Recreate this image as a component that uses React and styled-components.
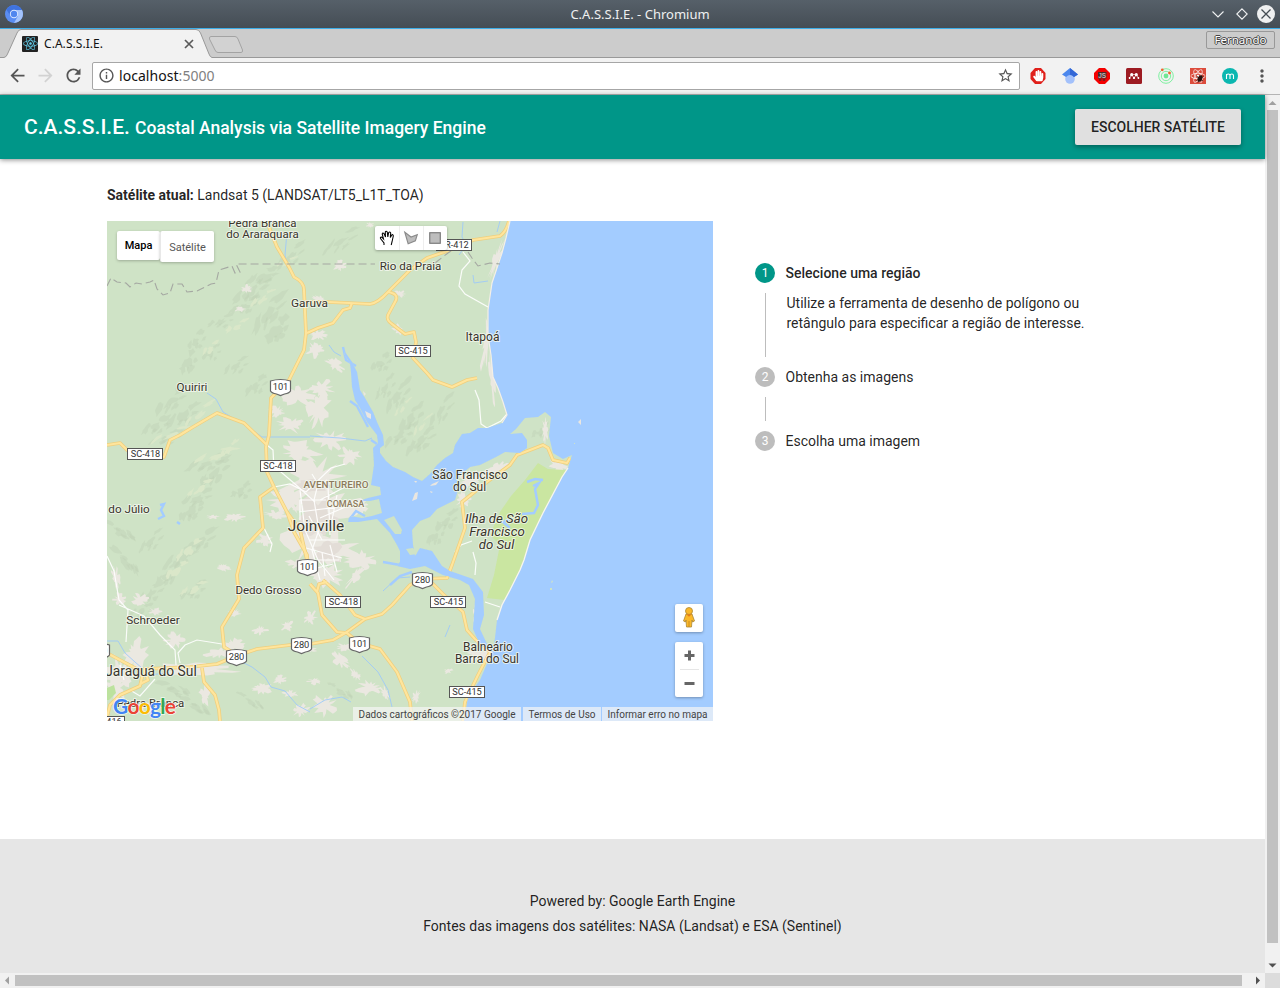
import React from 'react';
import styled, { createGlobalStyle } from 'styled-components';
import { MdArrowBack, MdArrowForward, MdRefresh, MdStarBorder, MdInfoOutline, MdMoreVert } from 'react-icons/md';
import { FaReact, FaHandPaper, FaMendeley } from 'react-icons/fa';

const GlobalStyle = createGlobalStyle`
  * { box-sizing: border-box; }
  body { margin: 0; background: #fff; font-family: Roboto, sans-serif; color: rgba(0, 0, 0, 0.87); }
`;

/* ---------- window frame ---------- */
const Window = styled.div`
  display: flex;
  flex-direction: column;
  width: 1280px;
  height: 988px;
  overflow: hidden;
`;
const TitleBar = styled.header`
  display: grid;
  grid-template-columns: 100px 1fr 100px;
  align-items: center;
  height: 29px;
  flex: none;
  padding: 0 5px;
  background: linear-gradient(#566069, #454d55);
  border-bottom: 1px solid #3daee9;
  color: #eff0f1;
  font: 13px 'Noto Sans', sans-serif;
  text-align: center;
`;
const WindowButtons = styled.div`
  display: flex;
  justify-content: flex-end;
`;
const TabStrip = styled.div`
  display: flex;
  height: 29px;
  flex: none;
  background: #ccc;
  border-bottom: 1px solid #999;
`;
const Tab = styled.div`
  position: relative;
  display: flex;
  align-items: center;
  width: 212px;
  height: 29px;
  padding: 0 17px 0 22px;
  font: 12px 'Noto Sans', sans-serif;
  color: #111;
`;
const TabShape = styled.svg`
  position: absolute;
  left: 0;
  top: 0;
`;
const Favicon = styled.span`
  position: relative;
  display: grid;
  place-items: center;
  width: 16px;
  height: 16px;
  margin-right: 6px;
  border-radius: 1px;
  background: #222;
  color: #61c9e6;
  font-size: 15px;
`;
const TabTitle = styled.span`
  position: relative;
  flex: 1;
  letter-spacing: 0.05px;
`;
const CloseTab = styled.svg`
  position: relative;
`;
const NewTab = styled.svg`
  margin-top: 6px;
  margin-left: -4px;
`;
const Profile = styled.div`
  display: flex;
  justify-content: center;
  width: 69px;
  height: 18px;
  margin: 2px 5px 0 auto;
  border: 1px solid #999;
  border-radius: 2px;
  color: #fff;
  font: 11.5px/16px 'Noto Sans', sans-serif;
  text-shadow: 1px 0 #444, -1px 0 #444, 0 1px #444, 0 -1px #444;
`;
const Toolbar = styled.div`
  display: flex;
  align-items: center;
  height: 37px;
  flex: none;
  background: #f2f2f2;
  border-bottom: 1px solid #b4b4b4;
`;
const NavButton = styled.span`
  display: grid;
  place-items: center;
  width: 28px;
  height: 28px;
  font-size: 21px;
  color: ${(p) => (p.$off ? '#d2d2d2' : '#555')};
`;
const NavGroup = styled.div`
  display: flex;
  padding: 0 0.5px 1px 3.5px;
`;
const AddressBar = styled.div`
  display: flex;
  align-items: center;
  width: 928px;
  height: 28px;
  margin-left: 4px;
  padding: 0 5px 1px;
  background: #fff;
  border: 1px solid #a6a6a6;
  border-radius: 2px;
  color: #111;
  font: 14px 'Noto Sans', sans-serif;
`;
const Url = styled.span`
  flex: 1;
  margin-left: 4px;
  padding-bottom: 1px;
  letter-spacing: 0.05px;
`;
const Port = styled.span`
  color: #808080;
`;
const Extensions = styled.div`
  display: flex;
  gap: 16px;
  margin-left: 10px;
`;
const Menu = styled(MdMoreVert)`
  margin-left: 14px;
  font-size: 20px;
  color: #555;
`;

/* ---------- viewport and scroll bars ---------- */
const Viewport = styled.div`
  display: grid;
  grid-template: 1fr 15px / 1fr 15px;
  flex: 1;
  min-height: 0;
`;
const Track = styled.div`
  display: flex;
  flex-direction: ${(p) => (p.$vertical ? 'column' : 'row')};
  align-items: center;
  background: #f1f1f1;
`;
const Thumb = styled.div`
  width: ${(p) => p.$w}px;
  height: ${(p) => p.$h}px;
  background: #c1c1c1;
`;
const ScrollArrow = styled.svg`
  flex: none;
  margin: ${(p) => p.$margin || 0};
`;
const Corner = styled.div`
  background: #dcdcdc;
`;

/* ---------- application ---------- */
const Page = styled.div`
  display: flex;
  flex-direction: column;
  min-width: 0;
  font-size: 14px;
`;
const AppBar = styled.div`
  position: relative;
  display: flex;
  align-items: center;
  justify-content: space-between;
  height: 64px;
  flex: none;
  padding: 0 24px;
  background: #009688;
  color: #fff;
  box-shadow: 0 1px 5px rgba(0, 0, 0, 0.45);
`;
const Brand = styled.h1`
  margin: 0;
  font-size: 21px;
  font-weight: 500;
  white-space: nowrap;
`;
const Tagline = styled.span`
  font-size: 17.5px;
`;
const RaisedButton = styled.button`
  width: 166px;
  height: 36px;
  padding: 0;
  border: 0;
  border-radius: 2px;
  background: #e0e0e0;
  color: rgba(0, 0, 0, 0.87);
  font: 500 14px Roboto, sans-serif;
  white-space: nowrap;
  box-shadow: 0 2px 5px rgba(0, 0, 0, 0.35);
`;
const Main = styled.main`
  flex: 1;
  padding: 26px 107px 0;
`;
const Current = styled.p`
  margin: 0 0 16px;
  line-height: 20px;
`;
const Strong = styled.b`
  font-weight: 700;
`;
const Columns = styled.div`
  display: flex;
  gap: 42px;
`;
const Steps = styled.div`
  padding-top: 42px;
`;
const StepHead = styled.div`
  display: flex;
  align-items: center;
  gap: 10.5px;
  height: 20px;
  font-weight: ${(p) => (p.$active ? 500 : 400)};
`;
const Badge = styled.span`
  display: grid;
  place-items: center;
  width: 20px;
  height: 20px;
  border-radius: 50%;
  background: ${(p) => (p.$active ? '#009688' : '#bdbdbd')};
  color: #fff;
  font-size: 12px;
  font-weight: 400;
`;
const StepBody = styled.div`
  width: 340px;
  height: ${(p) => p.$h}px;
  margin: 10px 0 10px 10px;
  padding-left: 20.5px;
  border-left: 1px solid #bdbdbd;
  line-height: 20px;
`;
const Footer = styled.footer`
  display: flex;
  flex-direction: column;
  align-items: center;
  height: 134px;
  padding-top: 50px;
  background: #e6e6e6;
  line-height: 25px;
`;

/* ---------- map ---------- */
const MapFrame = styled.div`
  position: relative;
  width: 606px;
  height: 500px;
  overflow: hidden;
  background: #a3ccff;
`;
const MapArt = styled.svg`
  display: block;
  font-family: Roboto, sans-serif;
`;
const MapTypes = styled.div`
  position: absolute;
  left: 10px;
  top: 10px;
  display: flex;
  align-items: flex-start;
  font-size: 11px;
`;
const MapType = styled.div`
  display: grid;
  place-items: center;
  width: ${(p) => (p.$on ? 43 : 54)}px;
  height: ${(p) => (p.$on ? 29 : 31)}px;
  padding-top: ${(p) => (p.$on ? 0 : 1)}px;
  border-left: ${(p) => (p.$on ? 0 : 1)}px solid #e8e8e8;
  background: #fff;
  border-radius: 2px;
  box-shadow: 0 1px 3px rgba(0, 0, 0, 0.25);
  color: ${(p) => (p.$on ? '#000' : '#565656')};
  font-weight: ${(p) => (p.$on ? 500 : 400)};
`;
const DrawTools = styled.div`
  position: absolute;
  left: 268px;
  top: 5px;
  display: flex;
  background: #fff;
  border-radius: 2px;
  box-shadow: 0 1px 3px rgba(0, 0, 0, 0.3);
`;
const DrawTool = styled.svg`
  width: 24px;
  height: 24px;
  & + & { border-left: 1px solid #eee; }
`;
const SideControls = styled.div`
  position: absolute;
  right: 10px;
  bottom: 24px;
  display: flex;
  flex-direction: column;
  gap: 10px;
`;
const ControlCard = styled.div`
  display: flex;
  flex-direction: column;
  align-items: center;
  width: 28px;
  height: ${(p) => p.$h}px;
  background: #fff;
  border-radius: 2px;
  box-shadow: 0 1px 3px rgba(0, 0, 0, 0.3);
`;
const Attribution = styled.div`
  position: absolute;
  right: 0;
  bottom: 0;
  display: flex;
  height: 14px;
  font-size: 10px;
  line-height: 15px;
  color: #444;
  white-space: nowrap;
`;
const Credit = styled.span`
  width: ${(p) => p.$w}px;
  margin-left: ${(p) => p.$gap || 0}px;
  padding-right: 5.5px;
  text-align: right;
  background: rgba(245, 245, 245, 0.7);
`;

/* Closed irregular outline around (cx, cy), turned by `angle` degrees. */
const blob = ([cx, cy, w, h, angle = 0], seed, points, low, spread) => {
  const a = (angle * Math.PI) / 180;
  const pts = [];
  for (let i = 0; i < points; i++) {
    const noise = Math.sin(seed * 91.7 + i * 47.3) * 43758.5;
    const r = low + spread * (noise - Math.floor(noise));
    const t = (i / points) * Math.PI * 2;
    const x = Math.cos(t) * w * r;
    const y = Math.sin(t) * h * r;
    pts.push(`${(cx + x * Math.cos(a) - y * Math.sin(a)).toFixed(1)},${(cy + x * Math.sin(a) + y * Math.cos(a)).toFixed(1)}`);
  }
  return `M${pts.join('L')}Z`;
};
const blobs = (list, points = 16, low = 0.4, spread = 0.65) => list.map((b, i) => blob(b, i + b[0], points, low, spread)).join('');

/* A ridge is three short, staggered slopes along its axis. */
const slopes = (list) => list.flatMap(([x, y, w, h, angle]) => {
  const a = (angle * Math.PI) / 180;
  return [-0.6, 0.05, 0.65].map((k, i) => [
    x + Math.cos(a) * w * k + (i - 1) * 1.5,
    y + Math.sin(a) * w * k + (i % 2 ? 2.5 : -1),
    w * 0.5,
    h * (i === 1 ? 1.1 : 0.8),
    angle + (i - 1) * 16,
  ]);
});

const ridges = [
  [250, 290, 24, 5, -38], [268, 312, 28, 5, -55], [276, 330, 16, 7, -60], [243, 305, 16, 4, -35], [262, 275, 18, 4, -30], [195, 340, 12, 4, -60], [187, 362, 14, 5, -70],
  [210, 352, 10, 3, -50], [170, 400, 22, 5, -45], [182, 415, 20, 5, -40], [155, 425, 16, 4, -35], [165, 437, 18, 3, -25], [205, 462, 22, 4, -25], [213, 472, 22, 5, -50], [196, 497, 17, 4, -30],
  [190, 510, 16, 5, -50], [240, 490, 11, 4, -45], [200, 540, 20, 4, -42], [180, 556, 24, 4, -40], [167, 574, 18, 5, -50], [150, 592, 17, 4, -45], [192, 590, 14, 4, -40],
  [125, 560, 20, 4, 50], [120, 530, 18, 4, 35], [150, 540, 16, 3, -50], [140, 610, 12, 3, -30], [397, 395, 20, 4, -60], [410, 418, 20, 4, -55], [384, 387, 16, 3, -60],
  [420, 440, 20, 4, -50], [398, 435, 18, 4, -40], [440, 410, 20, 3, -60], [380, 362, 12, 4, -50], [445, 520, 14, 4, -50], [434, 535, 12, 4, -60], [290, 255, 20, 3, -50], [340, 240, 22, 3, -40],
  [255, 385, 14, 4, -50], [235, 365, 14, 3, -40], [220, 320, 14, 3, -30], [173, 688, 17, 4, 20], [195, 705, 17, 4, 35], [250, 700, 15, 3, 35], [340, 690, 14, 3, 35], [540, 430, 11, 3, -50],
];
const towns = [
  [340, 266, 8, 6], [247, 289, 6, 5], [240, 309, 7, 3], [320, 300, 9, 5, 30], [318, 335, 10, 6], [335, 365, 13, 6, 40], [315, 350, 10, 8], [322, 388, 13, 9], [297, 395, 18, 11], [318, 410, 12, 20, 15],
  [290, 425, 14, 9], [277, 412, 10, 6], [330, 440, 17, 12], [300, 452, 22, 12], [350, 455, 12, 10], [315, 480, 35, 22], [325, 510, 34, 26], [310, 540, 28, 28], [335, 550, 28, 18], [360, 560, 16, 10],
  [290, 500, 22, 13], [325, 575, 20, 13], [356, 575, 16, 5, -50], [275, 515, 14, 5], [235, 517, 11, 5], [213, 517, 8, 2], [265, 540, 9, 7], [360, 505, 10, 10], [399, 329, 8, 5, 30], [400, 294, 6, 4],
  [487, 340, 5, 35, 8], [492, 380, 3, 30, -4], [496, 260, 4, 22, 20], [470, 480, 20, 9, -40], [498, 468, 15, 6, -20], [545, 430, 3, 15], [558, 466, 10, 6, 20], [464, 500, 9, 8],
  [116, 578, 4, 15, -10], [120, 600, 7, 8, -30], [140, 600, 9, 7], [155, 612, 7, 5], [135, 655, 14, 20], [120, 675, 16, 20], [190, 669, 50, 6], [115, 690, 14, 12], [175, 640, 12, 8], [233, 645, 12, 8], [220, 653, 16, 5, -8],
  [260, 630, 8, 5], [287, 626, 6, 7, 20], [310, 618, 7, 8, 35], [223, 567, 9, 4, 20], [235, 613, 8, 4], [340, 660, 12, 6, 40], [356, 675, 8, 4, 50], [370, 688, 14, 8], [385, 693, 8, 4, 60], [325, 705, 12, 12], [300, 710, 10, 7],
  [280, 680, 8, 5], [262, 688, 11, 6], [290, 694, 8, 4], [315, 681, 8, 4], [205, 695, 6, 12], [345, 647, 10, 4], [476, 615, 3, 12], [480, 655, 12, 8], [416, 697, 4, 8, 20], [448, 671, 5, 3], [310, 650, 8, 3], [297, 564, 12, 5], [370, 225, 4, 3],
];
const fields = [[198, 414, 20, 3, -45], [170, 434, 20, 3, -25], [215, 455, 22, 3, -20], [228, 449, 12, 3, -50], [199, 488, 15, 3, -40], [188, 550, 16, 4, -45], [176, 570, 13, 4, -40], [236, 326, 12, 3, -35], [210, 348, 10, 3, -50], [193, 588, 14, 3, -30], [262, 298, 14, 3, -40], [286, 262, 10, 2, -30], [422, 425, 14, 2, -55], [402, 408, 12, 2, -55]];

const roads = [
  'M267 221L269 227L277 247L289 267L294 277Q304 282 304 290L306 333L304 350L289 380L271 398L269 435L266 447L267 472L274 487L287 512L294 532L307 555L309 575',
  'M307 333L318 328L333 323L343 310L350 308L352 303',
  'M306 302H328L370 304Q378 303 388 292L410 270L427 258L450 250L473 240L500 236Q506 232 509 221',
  'M388 292Q400 294 395 302L388 315Q386 320 392 324L405 334L414 332L416 342L413 358L427 373L433 380L452 387L467 380L477 378',
  'M107 445L120 443L127 450L147 457L164 457L170 440L180 435L193 427L217 413L244 423L267 445',
  'M274 487L260 497L263 528L244 548L237 575L239 599L222 627L224 647L235 654',
  'M107 717L110 705L120 695L140 686L144 669L190 667L217 664L236 656L257 649L290 645L310 644L333 640L347 632L365 619L382 614L392 605L410 585L422 579L447 578L452 565L465 528L462 502L487 482L510 465L517 455L543 445L548 448L553 460L567 463L570 458',
  'M422 579L433 584L443 594L463 612L467 630L475 639L490 652L478 675L465 702L463 721',
  'M323 580L340 595L355 615L365 619M310 584L318 593L322 615L337 632L347 633L359 643L380 649L397 672L410 702L412 721M317 592L319 584L327 582',
  'M202 668L204 682L215 695L219 710L220 721M107 653L120 660L137 669M144 669L148 680L140 684',
  'M287 512L300 530L307 560',
];
const minorRoads = [
  'M463 252L470 261L462 270L459 286L465 294L488 307', 'M475 390L479 400L481 424L487 428L501 421L507 414L502 390',
  'M267 445L273 450L274 470L281 472L295 484L305 493L315 502', 'M274 487L290 484L306 492L331 468L345 464', 'M312 474L318 484L314 500L319 530L312 550L320 580', 'M300 490L305 530L318 560L334 580',
  'M300 500H326M299 512L338 507M295 525L335 522M310 540H345M306 548L342 558M328 486L330 535M337 495L330 530M300 500V520M320 500L345 487M320 518L350 505M322 552L325 576M330 545L337 572M309 516L322 540M314 560H339M317 568L333 564M327 480L316 488',
  'M107 556L114 571L119 600L128 610L126 642M119 605L144 616L160 635L175 650L176 665M180 663L178 653L185 645L197 640L222 644', 'M264 528L272 544L270 552', 'M473 552L476 563L475 575M485 602L500 607', 'M120 665L124 680M130 690L140 696L155 679',
  'M472 541L461 545L455 552',
];
const creeks = [
  'M287 232L285 255L287 265M207 393L216 399L223 412L250 428L262 437H310', 'M310 436L340 438L365 441L372 438', 'M463 222L462 237L466 245L459 255M473 275L474 283L488 281', 'M107 641L118 641L125 653L135 662L150 675L165 673',
  'M240 661L252 667L265 677L271 687L285 691L297 705L310 712', 'M362 656L378 672L388 690L392 707M310 709L325 700L342 697L351 702', 'M383 591L397 578L410 577M445 637L450 625',
  'M329 345L334 352L341 356', 'M500 221L497 232',
];

const shields = [[280.5, 387, '101'], [307.5, 567, '101'], [359.5, 644, '101'], [422.5, 580, '280'], [301.5, 645, '280'], [236.5, 657, '280'], [99.5, 651, '280']];
const plates = [[413, 351, 'SC-415'], [145.5, 454, 'SC-418'], [278, 466, 'SC-418'], [343.5, 602, 'SC-418'], [448.5, 602, 'SC-415'], [467, 692, 'SC-415'], [454, 245, 'PR-412'], [107, 722, 'SC-416']];
const labels = [
  [262.5, 227, 'Pedra Branca', 11.5], [262.5, 238, 'do Araraquara', 11.5], [410.5, 270, 'Rio da Praia', 11.6], [309.5, 307, 'Garuva', 11.8], [482.5, 341, 'Itapoá', 12], [192, 391, 'Quiriri', 11.7],
  [470, 479, 'São Francisco', 12], [469.5, 491, 'do Sul', 12], [129, 513, 'do Júlio', 11.7], [316, 531, 'Joinville', 15.4], [268.5, 594, 'Dedo Grosso', 11.5], [153, 624, 'Schroeder', 11.8],
  [151, 676, 'Jaraguá do Sul', 13.8], [150.5, 707, 'Pedra Branca', 11.4], [488, 651, 'Balneário', 11.9], [487, 663, 'Barra do Sul', 11.9],
];

const MapDrawing = () => (
  <MapArt width="606" height="500" viewBox="107 221 606 500">
    <defs>
      <clipPath id="land">
        <path d="M107 221H510L506 238L502 253L492 283L488 310L488 335L491 355L493 377L498 388L503 402L507 415L502 423L487 428L478 428L470 433L462 434L455 445L453 453L445 458L437 465L430 474L422 481L413 477L405 472L393 467L386 461L380 453L380 448L384 445L383 435L377 422L373 412L365 398L360 390L357 372L352 362L345 352L344 354L350 363L351 372L352 387L355 400L360 408L367 422L377 435L378 443L373 448L374 465L371 485L380 487L381 495L368 498L359 501L370 501L379 499L382 513L372 516L362 518L350 516L348 522L358 522L377 519L390 533L397 545L400 551L400 562L397 566L410 569L425 566L443 575L460 580L469 585L475 599L473 629L480 645L492 652L480 680L468 697L464 721H107Z" />
        <path d="M415 556L413 545L412 530L420 521L430 517L437 509L455 500L458 490L458 477L470 467L480 465L496 457L505 452L520 453L527 448L527 440L522 433L510 434L516 429L525 418L538 417L545 412L551 417L549 436L553 453L563 459L572 455L568 468L562 477L543 513L530 540L524 560L520 570L510 590L502 605L497 620L495 638L493 650L487 644L480 629L484 615L483 592L473 579L450 571L442 566L432 551L420 548Z" />
        <path d="M384 520L394 516L402 530L401 534L395 534Z" />
      </clipPath>
    </defs>
    <rect x="107" y="221" width="606" height="500" fill="#a3ccff" />
    <g clipPath="url(#land)">
      <rect x="107" y="221" width="606" height="500" fill="#cfe3c6" />
      <path d={blobs(slopes(ridges), 12)} fill="#c8dbbf" />
      <path d={blobs(slopes(ridges.map((r) => [r[0] + 5, r[1] + 4, r[2] * 0.6, r[3] * 0.6, r[4]])), 10)} fill="#bdd0b5" opacity=".4" />
      <path d={blobs(slopes(fields), 12)} fill="#dae7c9" />
      <path d={blobs(towns, 30, 0.35, 0.8)} fill="#ebe8e1" />
      <path d={blobs([[318, 518, 25, 26], [328, 552, 17, 14], [312, 485, 22, 9]])} fill="#e3ddd8" />
      <path d="M538 463L548 469L565 470L580 480L530 570L505 600L487 598L494 575L500 545L490 535L500 512L511 496L525 480Z" fill="#cae6a1" />
      <path d="M107 688L114 685L116 693L109 700H107Z" fill="#bce29e" />
      <path d="M527 482L535 479L543 480M533 486L539 483L535 489L538 505L534 513L522 514M510 528L503 522L510 519" fill="none" stroke="#a3ccff" strokeWidth="2.5" />
      <g fill="none" stroke="#9dc9fb" strokeWidth="1" opacity=".85">{creeks.map((d) => <path key={d} d={d} />)}</g>
      <path d="M343 347L346 360L356 366M350 401L357 406L368 427M371 440L377 444M160 505L164 504L161 510L164 516L158 519M177 522L180 524M349 520L356 511L365 516M430 563L444 571M390 585L400 576L412 572M383 562L400 565" fill="none" stroke="#a3ccff" strokeWidth="2.4" />
      <g fill="none" stroke="#fff" strokeWidth="1.2" opacity=".9">{minorRoads.map((d) => <path key={d} d={d} />)}</g>
      <g fill="none" stroke="#efcf7e" strokeWidth="3.6" strokeLinejoin="round">{roads.map((d) => <path key={d} d={d} />)}</g>
      <g fill="none" stroke="#ffe59c" strokeWidth="2.1" strokeLinejoin="round">{roads.map((d) => <path key={d} d={d} />)}</g>
    </g>
    <path d="M568 468L562 477L543 513L530 540L524 560L520 570L510 590L502 605L497 620" fill="none" stroke="#f7f5ef" strokeWidth="1.3" />
    <path d="M510 221L506 238L502 253L492 283L488 310L488 335L491 355L493 377L498 388L503 402L507 415L502 423" fill="none" stroke="#f4efe7" strokeWidth="1.2" />
    <path d="M415 493L418 492L417 499L412 501ZM432 484L439 481L436 485L430 486ZM430 491L433 492L431 493ZM578 422L581 419V425ZM363 391L366 394L364 396ZM365 411L371 414L371 419L367 417ZM414 481L417 481L416 483Z" fill="#eae6e0" />
    <path d="M552 580L553 582L551 583ZM550 588H552V590H550ZM574 443H575V444H574ZM406 549L413 548L417 554L410 555Z" fill="#cfe3c6" />
    <path d="M107 286L111 278L117 282L126 283L130 287L136 283L142 284L150 282L154 280L157 289L163 295L170 293L173 284L182 284L187 292L197 291L211 284L216 283L219 270L232 266L235 273L240 272L236 264H375M435 263L448 253L454 249M468 252L472 258L478 266L490 263L500 264" fill="none" stroke="#a5a8a2" strokeWidth="1.1" strokeDasharray="8 4" />

    {plates.map(([x, y, t]) => (
      <g key={`${x}${y}`}>
        <rect x={Math.floor(x) - 17.5} y={y - 5.5} width="35" height="11" fill="#fff" stroke="#555" />
        <text x={x} y={y + 3.3} fontSize="9.2" textAnchor="middle" fill="#333">{t}</text>
      </g>
    ))}
    {shields.map(([x, y, t]) => (
      <g key={`${x}${y}`}>
        <path d={`M${x - 10} ${y - 6}Q${x} ${y - 9} ${x + 10} ${y - 6}V${y + 4}Q${x + 9} ${y + 6} ${x + 4} ${y + 7}L${x} ${y + 8.5}L${x - 4} ${y + 7}Q${x - 9} ${y + 6} ${x - 10} ${y + 4}Z`} fill="#fff" stroke="#666" strokeWidth="1.2" />
        <text x={x} y={y + 3.3} fontSize="9.3" textAnchor="middle" fill="#333">{t}</text>
      </g>
    ))}
    <g textAnchor="middle" fill="#39352c" stroke="#f4f8ef" strokeOpacity=".8" strokeWidth="2" paintOrder="stroke" strokeLinejoin="round">
      {labels.map(([x, y, t, s]) => <text key={`${x}${y}`} x={x} y={y} fontSize={s}>{t}</text>)}
      <g fontStyle="italic" fontSize="13.2">
        <text x="496.5" y="523">Ilha de São</text>
        <text x="497" y="536">Francisco</text>
        <text x="496.5" y="549">do Sul</text>
      </g>
      <g fill="#8d7a5c" fontWeight="500">
        <text x="336" y="488" fontSize="9.9">AVENTUREIRO</text>
        <text x="345.5" y="507" fontSize="9">COMASA</text>
      </g>
    </g>
    <text x="113" y="714" fontFamily="Lato, sans-serif" fontSize="21" fontWeight="700" textLength="63" stroke="#fff" strokeWidth="1.6" strokeOpacity=".75" paintOrder="stroke">
      <tspan fill="#4285f4">G</tspan><tspan fill="#ea4335">o</tspan><tspan fill="#fbbc05">o</tspan><tspan fill="#4285f4">g</tspan><tspan fill="#34a853">l</tspan><tspan fill="#ea4335">e</tspan>
    </text>
  </MapArt>
);

const GoogleMap = () => (
  <MapFrame>
    <MapDrawing />
    <MapTypes>
      <MapType $on>Mapa</MapType>
      <MapType>Satélite</MapType>
    </MapTypes>
    <DrawTools>
      <DrawTool viewBox="0 0 24 24">
        <path d="M9 19V17L5.5 12.5Q5 11 6.5 11L8.5 13L7.2 8Q7.5 6.3 9 7.5L10.5 11L10.3 6Q11 4.5 12.3 6L12.8 11L13.7 6.5Q14.8 5.2 15.7 7L15.3 11.5L16.9 8.8Q18.3 8.2 18.3 10L17 16L16.2 19" fill="#fff" stroke="#000" strokeWidth="1.05" />
      </DrawTool>
      <DrawTool viewBox="0 0 24 24">
        <path d="M5 6L11.5 11L18 8.5L16 15L8.5 18Z" fill="#bdbdbd" stroke="#8b8b8b" strokeWidth="1.2" />
      </DrawTool>
      <DrawTool viewBox="0 0 24 24">
        <rect x="6" y="6.5" width="11" height="11" fill="#bdbdbd" stroke="#777" strokeWidth="1.2" />
      </DrawTool>
    </DrawTools>
    <SideControls>
      <ControlCard $h={28}>
        <svg width="28" height="28" viewBox="0 0 28 28">
          <path d="M11 10H17L19.5 17L17.7 18L17 16L16.5 23H11.5L11 16L10.3 18L8.5 17Z" fill="#fbb829" stroke="#a98736" strokeWidth=".8" />
          <circle cx="14" cy="7" r="3.5" fill="#fbb829" stroke="#a98736" strokeWidth=".8" />
          <path d="M11.5 10.5H16.5L14 12.8Z" fill="#e87b16" />
          <path d="M14 17V23" stroke="#c88c21" />
        </svg>
      </ControlCard>
      <ControlCard $h={55}>
        <svg width="28" height="55" viewBox="0 0 28 55">
          <path d="M9.5 13.5H19.5M14.5 8.5V18.5M9.5 41.5H19.5" stroke="#666" strokeWidth="3" />
          <path d="M5 27.5H24" stroke="#e6e6e6" />
        </svg>
      </ControlCard>
    </SideControls>
    <Attribution>
      <Credit $w={168}>Dados cartográficos ©2017 Google</Credit>
      <Credit $w={78} $gap={2}>Termos de Uso</Credit>
      <Credit $w={111} $gap={1}>Informar erro no mapa</Credit>
    </Attribution>
  </MapFrame>
);

const ExtensionIcons = () => (
  <Extensions>
    <svg width="16" height="16" viewBox="0 0 16 16">
      <path d="M5 0H11L15.5 5V11L11 16H5L.5 11V5Z" fill="#e0201b" />
      <FaHandPaper x="2.5" y="2" size="11.5" color="#fff" />
    </svg>
    <svg width="16" height="16" viewBox="0 0 16 16">
      <circle cx="8" cy="11" r="4.8" fill="#a3c1fb" />
      <path d="M8 0L0 6.5L4 9Q8 5 12 9L16 6.5Z" fill="#4b87ed" />
      <path d="M8 0L16 6.5L12 9Q10 6.8 8 6.8Z" fill="#3367d6" />
    </svg>
    <svg width="16" height="16" viewBox="0 0 16 16">
      <path d="M5 0H11L16 5V11L11 16H5L0 11V5Z" fill="#f40000" />
      <rect x="4" y="4" width="8.5" height="6.5" fill="#4a2a2a" />
      <text x="8.2" y="9.7" fontFamily="Liberation Sans, sans-serif" fontSize="6.5" fontWeight="700" textAnchor="middle" fill="#c4b4b4">JS</text>
      <path d="M5 12H7.4M8.8 12H11.2" stroke="#7c1a1a" strokeWidth="2" />
    </svg>
    <svg width="16" height="16" viewBox="0 0 16 16">
      <rect width="16" height="16" rx="1.5" fill="#9d1b22" />
      <FaMendeley x="2.5" y="2.5" size="11" color="#fff" />
    </svg>
    <svg width="16" height="16" viewBox="0 0 16 16" fill="none" stroke="#7ef0a0">
      <circle cx="8" cy="8" r="7.3" />
      <circle cx="8" cy="8" r="4.7" />
      <circle cx="8" cy="8" r="2.4" fill="#6ee895" stroke="none" />
      <circle cx="4.3" cy="1.8" r="1.4" fill="#f0652f" stroke="none" />
      <circle cx="11.5" cy="5" r="1.4" fill="#f0652f" stroke="none" />
    </svg>
    <svg width="16" height="16" viewBox="0 0 16 16">
      <rect width="16" height="16" fill="#dc4c3c" />
      <FaReact x="0.5" y="0.5" size="15" color="#fff" />
      <ellipse cx="10" cy="10.5" rx="2.2" ry="3.2" transform="rotate(25 10 10.5)" fill="#2a1512" />
      <path d="M6.5 8L13 13M6.5 12.5L13.5 8.5M8 14.5L12 7" stroke="#2a1512" strokeWidth=".8" />
    </svg>
    <svg width="16" height="16" viewBox="0 0 16 16">
      <circle cx="8" cy="8" r="8" fill="#0bb7b0" />
      <path d="M4.5 11V6M4.5 7.5Q4.7 6 6.3 6T8 7.5V11M8 7.5Q8.2 6 9.8 6T11.5 7.5V11" fill="none" stroke="#fff" strokeWidth="1.1" />
    </svg>
  </Extensions>
);

export default function App() {
  return (
    <Window>
      <GlobalStyle />
      <TitleBar>
        <svg width="18" height="18" viewBox="0 0 18 18">
          <circle cx="9" cy="9" r="9" fill="#5a8df3" />
          <path d="M9 5H17A9 9 0 0 1 9 18L13 11Z" fill="#a4c3fb" />
          <path d="M1.3 4.5A9 9 0 0 1 17 5H9L5.5 11Z" fill="#3f73df" />
          <circle cx="9" cy="9" r="4.2" fill="#dbe7ff" />
          <circle cx="9" cy="9" r="3.2" fill="#5086ee" />
        </svg>
        <span>C.A.S.S.I.E. - Chromium</span>
        <WindowButtons>
          <svg width="66" height="20" viewBox="0 0 66 20" fill="none" stroke="#eff0f1" strokeWidth="1.1">
            <path d="M3.5 7.5L9 13L14.5 7.5M33 4.8L38.2 10L33 15.2L27.8 10Z" />
            <circle cx="57" cy="10" r="9" fill="#eff0f1" stroke="none" />
            <path d="M52.5 5.5L61.5 14.5M61.5 5.5L52.5 14.5" stroke="#444c53" strokeWidth="1.3" />
          </svg>
        </WindowButtons>
      </TitleBar>
      <TabStrip>
        <Tab>
          <TabShape width="212" height="29" viewBox="0 0 212 29">
            <path d="M0 28.5H4Q6.5 28 7.5 25L17 4Q18.5 .5 21 .5H196Q199 .5 200.5 4L209 25Q210 28 212 28.5V29H0Z" fill="#f2f2f2" />
            <path d="M0 28.5H4Q6.5 28 7.5 25L17 4Q18.5 .5 21 .5H196Q199 .5 200.5 4L209 25Q210 28 212 28.5" fill="none" stroke="#999" />
          </TabShape>
          <Favicon><FaReact /></Favicon>
          <TabTitle>C.A.S.S.I.E.</TabTitle>
          <CloseTab width="12" height="12" viewBox="0 0 12 12"><path d="M2 2L10 10M10 2L2 10" stroke="#5a5a5a" strokeWidth="1.7" /></CloseTab>
        </Tab>
        <NewTab width="37" height="20" viewBox="0 0 37 20">
          <path d="M3 1.5H27Q29 1.5 30 4L34.5 15Q35 17.5 33 17.5H10Q8 17.5 7 15L1.5 4Q1 1.5 3 1.5Z" fill="#d2d2d2" stroke="#a3a3a3" />
        </NewTab>
        <Profile>Fernando</Profile>
      </TabStrip>
      <Toolbar>
        <NavGroup>
          <NavButton><MdArrowBack /></NavButton>
          <NavButton $off><MdArrowForward /></NavButton>
          <NavButton><MdRefresh /></NavButton>
        </NavGroup>
        <AddressBar>
          <MdInfoOutline size="17" color="#555" />
          <Url>localhost<Port>:5000</Port></Url>
          <MdStarBorder size="17" color="#555" />
        </AddressBar>
        <ExtensionIcons />
        <Menu />
      </Toolbar>
      <Viewport>
        <Page>
          <AppBar>
            <Brand>C.A.S.S.I.E. <Tagline>Coastal Analysis via Satellite Imagery Engine</Tagline></Brand>
            <RaisedButton>ESCOLHER SATÉLITE</RaisedButton>
          </AppBar>
          <Main>
            <Current><Strong>Satélite atual:</Strong> Landsat 5 (LANDSAT/LT5_L1T_TOA)</Current>
            <Columns>
              <GoogleMap />
              <Steps>
                <StepHead $active><Badge $active>1</Badge>Selecione uma região</StepHead>
                <StepBody $h={64}>Utilize a ferramenta de desenho de polígono ou<br />retângulo para especificar a região de interesse.</StepBody>
                <StepHead><Badge>2</Badge>Obtenha as imagens</StepHead>
                <StepBody $h={24} />
                <StepHead><Badge>3</Badge>Escolha uma imagem</StepHead>
              </Steps>
            </Columns>
          </Main>
          <Footer>
            <span>Powered by: Google Earth Engine</span>
            <span>Fontes das imagens dos satélites: NASA (Landsat) e ESA (Sentinel)</span>
          </Footer>
        </Page>
        <Track $vertical>
          <ScrollArrow width="15" height="15" viewBox="0 0 15 15"><path d="M3.5 10L7.5 6L11.5 10Z" fill="#a0a0a0" /></ScrollArrow>
          <Thumb $w={11} $h={833} />
          <ScrollArrow $margin="auto 0 0" width="15" height="15" viewBox="0 0 15 15"><path d="M3.5 5.5L7.5 9.5L11.5 5.5Z" fill="#505050" /></ScrollArrow>
        </Track>
        <Track>
          <ScrollArrow width="15" height="15" viewBox="0 0 15 15"><path d="M9 3.5L5 7.5L9 11.5Z" fill="#a0a0a0" /></ScrollArrow>
          <Thumb $w={1227} $h={11} />
          <ScrollArrow $margin="0 0 0 auto" width="15" height="15" viewBox="0 0 15 15"><path d="M6 3.5L10 7.5L6 11.5Z" fill="#505050" /></ScrollArrow>
        </Track>
        <Corner />
      </Viewport>
    </Window>
  );
}
